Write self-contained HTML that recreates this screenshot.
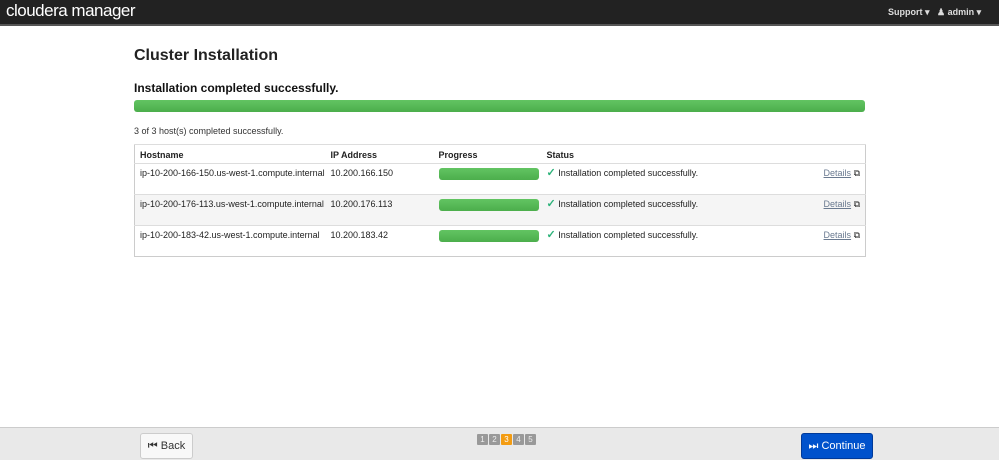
<!DOCTYPE html><html><head><style>
body{margin:0;width:999px;height:459px;position:relative;font-family:"Liberation Sans",Arial,sans-serif;background:#fff;overflow:hidden}
.nav{position:absolute;left:0;top:0;width:999px;height:24px;background:#222;border-bottom:2px solid #555}
.logo{position:absolute;left:6px;top:1px;color:#fff;font-size:17px;letter-spacing:-0.5px}
.navr{position:absolute;top:7px;color:#ddd;font-size:9px;font-weight:bold}
h1{position:absolute;left:134px;top:47px;margin:0;font-size:16px;font-weight:bold;color:#222}
h2{position:absolute;left:134px;top:81px;margin:0;font-size:12px;font-weight:bold;color:#111}
.bar{background:linear-gradient(#62c462,#4cae4c);border-radius:3px}
.small{position:absolute;left:134px;top:126px;font-size:9px;color:#333}
table{position:absolute;left:134px;top:144px;width:732px;border:1px solid #ccc;border-collapse:collapse;font-size:9px;color:#222;table-layout:fixed}
td,th{text-align:left;vertical-align:top;padding:0 5px;border-top:1px solid #ddd;line-height:11px;white-space:nowrap;overflow:hidden}
th{height:19px;padding-top:5px;box-sizing:border-box}
td{height:31px;padding-top:4px;box-sizing:border-box}
tr.alt td{background:#f5f5f5}
.pb{width:100px;height:12px;margin-top:0}
.ck{color:#2db37a;font-weight:bold;font-size:11px}
a{text-decoration:underline;color:#6a7a90}
.foot{position:absolute;left:0;top:427px;width:999px;height:32px;background:#e9e9e9;border-top:1px solid #ccc}
.btn{position:absolute;top:5px;height:24px;border-radius:3px;font-size:11px;line-height:24px;text-align:center}
.pg{position:absolute;top:6px;left:477px;display:flex;gap:1px}
.pg span{width:11px;height:11px;background:#999;color:#eee;font-size:8px;text-align:center;line-height:11px;border-radius:1px}
</style></head><body>
<div class="nav"><div class="logo">cloudera manager</div>
<div class="navr" style="left:888px">Support ▾</div><div class="navr" style="left:937px">&#9823; admin ▾</div></div>
<h1>Cluster Installation</h1>
<h2>Installation completed successfully.</h2>
<div class="bar" style="position:absolute;left:134px;top:100px;width:731px;height:12px"></div>
<div class="small">3 of 3 host(s) completed successfully.</div>
<table>
<colgroup><col style="width:191px"><col style="width:108px"><col style="width:108px"><col style="width:250px"><col></colgroup>
<tr><th>Hostname</th><th>IP Address</th><th>Progress</th><th>Status</th><th></th></tr>
<tr><td>ip-10-200-166-150.us-west-1.compute.internal</td><td>10.200.166.150</td><td><div class="bar pb"></div></td><td><span class="ck">✓</span> Installation completed successfully.</td><td style="text-align:right"><a>Details</a> ⧉</td></tr>
<tr class="alt"><td>ip-10-200-176-113.us-west-1.compute.internal</td><td>10.200.176.113</td><td><div class="bar pb"></div></td><td><span class="ck">✓</span> Installation completed successfully.</td><td style="text-align:right"><a>Details</a> ⧉</td></tr>
<tr><td>ip-10-200-183-42.us-west-1.compute.internal</td><td>10.200.183.42</td><td><div class="bar pb"></div></td><td><span class="ck">✓</span> Installation completed successfully.</td><td style="text-align:right"><a>Details</a> ⧉</td></tr>
</table>
<div class="foot">
<div class="btn" style="left:140px;width:51px;background:#f8f8f8;border:1px solid #ccc;color:#333">⏮ Back</div>
<div class="pg"><span>1</span><span>2</span><span style="background:#f39c12;color:#fff">3</span><span>4</span><span>5</span></div>
<div class="btn" style="left:801px;width:70px;background:#0052cc;border:1px solid #003a99;color:#fff">⏭ Continue</div>
</div>
</body></html>
